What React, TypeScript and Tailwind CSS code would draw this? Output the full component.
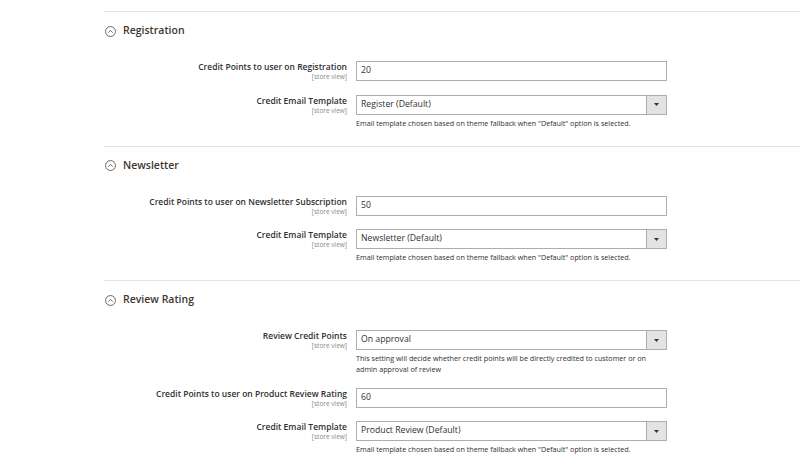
import type { ReactNode } from 'react';

type Row = {
  label: string;
  value: string;
  select?: boolean;
  note?: ReactNode;
};

type Section = { title: string; rows: Row[] };

const FALLBACK = 'Email template chosen based on theme fallback when "Default" option is selected.';

const sections: Section[] = [
  {
    title: 'Registration',
    rows: [
      { label: 'Credit Points to user on Registration', value: '20' },
      { label: 'Credit Email Template', value: 'Register (Default)', select: true, note: FALLBACK },
    ],
  },
  {
    title: 'Newsletter',
    rows: [
      { label: 'Credit Points to user on Newsletter Subscription', value: '50' },
      { label: 'Credit Email Template', value: 'Newsletter (Default)', select: true, note: FALLBACK },
    ],
  },
  {
    title: 'Review Rating',
    rows: [
      {
        label: 'Review Credit Points',
        value: 'On approval',
        select: true,
        note: (
          <>
            This setting will decide whether credit points will be directly credited to customer or on
            <br />
            admin approval of review
          </>
        ),
      },
      { label: 'Credit Points to user on Product Review Rating', value: '60' },
      { label: 'Credit Email Template', value: 'Product Review (Default)', select: true, note: FALLBACK },
    ],
  },
];

function CollapseIcon() {
  return (
    <svg className="w-[11px] h-[11px] shrink-0" viewBox="0 0 12 12" fill="none" stroke="#514943" strokeWidth={0.9}>
      <circle cx="6" cy="6" r="5.4" />
      <path d="M3.8 7L6 4.8 8.2 7" strokeLinecap="round" strokeLinejoin="round" />
    </svg>
  );
}

function Field({ row }: { row: Row }) {
  return (
    <div className="flex gap-[9px] mb-[13.5px]">
      {/* label column */}
      <div className="w-[243px] shrink-0 text-right">
        <div className="text-[8.5px] leading-[12px] font-semibold text-[#303030]">{row.label}</div>
        <div className="text-[6.5px] leading-[7px] text-[#8a8a8a]">[store view]</div>
      </div>

      <div className="w-[311px] shrink-0">
        <div className="flex h-[20px] border border-[#adadad] bg-white">
          <div className="flex-1 flex items-center pl-[4px] text-[8.7px] text-[#303030]">{row.value}</div>
          {row.select && (
            <div className="w-[20px] flex items-center justify-center bg-[#e3e3e3] border-l border-[#adadad]">
              <svg className="w-[5px] h-[3px]" viewBox="0 0 5 3"><path d="M0 0h5L2.5 3z" fill="#333" /></svg>
            </div>
          )}
        </div>
        {row.note && (
          <div className="mt-[3px] text-[7.2px] leading-[10.5px] text-[#303030]">{row.note}</div>
        )}
      </div>
    </div>
  );
}

export default function App() {
  return (
    <div className="w-[800px] h-[464px] overflow-hidden bg-white pt-[11px] pl-[104px]" style={{ fontFamily: '"Open Sans", "Liberation Sans", sans-serif' }}>
      {sections.map(section => (
        <div key={section.title} className="border-t border-[#e3e3e3] pb-[4px]">
          {/* заголовок секции */}
          <div className="flex items-center gap-[7px] h-[16px] mt-[11px] mb-[22px] pl-[1px]">
            <CollapseIcon />
            <span className="text-[10.5px] font-semibold text-[#41362f]">{section.title}</span>
          </div>
          {section.rows.map((row, i) => (
            <Field key={i} row={row} />
          ))}
        </div>
      ))}
    </div>
  );
}
